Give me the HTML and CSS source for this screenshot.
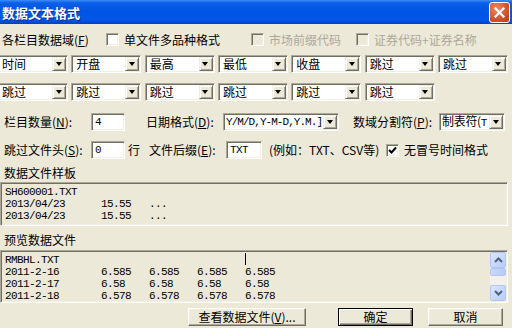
FILE: index.html
```html
<!DOCTYPE html>
<html>
<head>
  <link rel="stylesheet" href="styles.css">
</head>
<body>
  <div class="titlebar">
    <span class="title">数据文本格式</span>
    <span class="close">
      <svg width="11" height="11" viewBox="0 0 11 11"><path d="M1.5 1.5l8 8M9.5 1.5l-8 8" stroke="#fff" stroke-width="2.2" stroke-linecap="square"/></svg>
    </span>
  </div>

  <div class="opts">
    <span class="opt-label">各栏目数据域(<u>F</u>)</span>
    <span class="check opt-multi"><span class="box"></span>单文件多品种格式</span>
    <span class="check opt-market disabled"><span class="box"></span>市场前缀代码</span>
    <span class="check disabled"><span class="box"></span>证券代码+证券名称</span>
  </div>

  <div class="combos">
    <div class="combo"><span class="val">时间</span><span class="arrow"></span></div>
    <div class="combo"><span class="val">开盘</span><span class="arrow"></span></div>
    <div class="combo"><span class="val">最高</span><span class="arrow"></span></div>
    <div class="combo"><span class="val">最低</span><span class="arrow"></span></div>
    <div class="combo"><span class="val">收盘</span><span class="arrow"></span></div>
    <div class="combo"><span class="val">跳过</span><span class="arrow"></span></div>
    <div class="combo"><span class="val">跳过</span><span class="arrow"></span></div>
  </div>
  <div class="combos second">
    <div class="combo"><span class="val">跳过</span><span class="arrow"></span></div>
    <div class="combo"><span class="val">跳过</span><span class="arrow"></span></div>
    <div class="combo"><span class="val">跳过</span><span class="arrow"></span></div>
    <div class="combo"><span class="val">跳过</span><span class="arrow"></span></div>
    <div class="combo"><span class="val">跳过</span><span class="arrow"></span></div>
    <div class="combo"><span class="val">跳过</span><span class="arrow"></span></div>
  </div>

  <div class="fields">
    <span class="lbl lbl-count">栏目数量(<u>N</u>):</span>
    <span class="input in-small"><span class="mono">4</span></span>
    <span class="lbl lbl-date">日期格式(<u>D</u>):</span>
    <div class="combo combo-date"><span class="val mono">Y/M/D,Y-M-D,Y.M.]</span><span class="arrow"></span></div>
    <span class="lbl lbl-sep">数域分割符(<u>P</u>):</span>
    <div class="combo combo-sep"><span class="val">制表符(<span class="mono">T</span></span><span class="arrow"></span></div>
  </div>
  <div class="fields second">
    <span class="lbl lbl-count">跳过文件头(<u>S</u>):</span>
    <span class="input in-small"><span class="mono">0</span></span>
    <span class="lbl lbl-row">行</span>
    <span class="lbl lbl-date">文件后缀(<u>E</u>):</span>
    <span class="input in-ext"><span class="mono">TXT</span></span>
    <span class="lbl lbl-eg">(例如：TXT、CSV等)</span>
    <span class="check"><span class="box checked"><svg width="9" height="9" viewBox="0 0 9 9"><path d="M1 4l2.5 2.5L8 1.5" fill="none" stroke="#000" stroke-width="2"/></svg></span>无冒号时间格式</span>
  </div>

  <div class="caption">数据文件样板</div>
  <pre class="panel sample">SH600001.TXT
2013/04/23      15.55   ...
2013/04/23      15.55   ...</pre>

  <div class="caption">预览数据文件</div>
  <div class="panel preview">
    <pre class="lines">RMBHL.TXT                               <span class="caret"></span>
2011-2-16       6.585   6.585   6.585   6.585
2011-2-17       6.58    6.58    6.58    6.58
2011-2-18       6.578   6.578   6.578   6.578</pre>
    <div class="scrollbar">
      <span class="sb-btn"><svg width="9" height="6" viewBox="0 0 9 6"><path d="M1 5l3.5-3.5L8 5" fill="none" stroke="#4d6185" stroke-width="2"/></svg></span>
      <span class="sb-thumb"></span>
      <span class="sb-track"></span>
      <span class="sb-btn"><svg width="9" height="6" viewBox="0 0 9 6"><path d="M1 1l3.5 3.5L8 1" fill="none" stroke="#4d6185" stroke-width="2"/></svg></span>
    </div>
  </div>

  <div class="buttons">
    <button class="btn btn-view">查看数据文件(<u>V</u>)...</button>
    <button class="btn btn-ok default">确定</button>
    <button class="btn btn-cancel">取消</button>
  </div>
</body>
</html>
```

FILE: styles.css
```css
* {
  margin: 0;
  padding: 0;
  box-sizing: border-box;
}

body {
  width: 512px;
  height: 328px;
  overflow: hidden;
  background: #ece9d8;
  color: #000;
  font-family: "Noto Sans CJK SC", sans-serif;
  font-size: 12px;
  line-height: 14px;
}

u {
  text-decoration: underline;
  text-underline-offset: 1px;
}

.mono {
  font-family: "Liberation Mono", monospace;
  font-size: 11px;
  letter-spacing: -0.6px;
}

/* title bar */
.titlebar {
  height: 24px;
  display: flex;
  align-items: center;
  justify-content: space-between;
  padding: 0 2px 0 2px;
  background: linear-gradient(#3d8cf7 0%, #0b5fe8 12%, #0055e3 45%, #0056e8 85%, #003fc2 100%);
}

.title {
  color: #fff;
  font-weight: bold;
  font-size: 13px;
  text-shadow: 1px 1px #0a2c8a;
  margin-top: 1px;
}

.close {
  width: 21px;
  height: 21px;
  border: 1px solid #fff;
  border-radius: 3px;
  background: radial-gradient(circle at 35% 30%, #ec8a6a, #d3552f 55%, #b93a16);
  display: flex;
  align-items: center;
  justify-content: center;
}

/* checkbox row */
.opts {
  display: flex;
  align-items: center;
  height: 13px;
  margin-top: 9px;
  line-height: 13px;
}

.opt-label {
  width: 106px;
  padding-left: 2px;
}

.check {
  display: flex;
  align-items: center;
  white-space: nowrap;
}

.opt-multi {
  width: 145px;
}

.opt-market {
  width: 105px;
}

.box {
  width: 13px;
  height: 13px;
  margin-right: 5px;
  background: #fff;
  border: 1px solid;
  border-color: #aca899 #fff #fff #aca899;
  box-shadow: inset 1px 1px #716f64, inset -1px -1px #f1efe2;
  display: flex;
  align-items: center;
  justify-content: center;
}

.disabled {
  color: #aca899;
}

.disabled .box {
  background: #ece9d8;
}

/* combo boxes */
.combos {
  display: grid;
  grid-template-columns: repeat(7, 70px);
  column-gap: 3.33px;
  margin: 9px 0 0 -2px;
}

.combos.second {
  margin-top: 10px;
}

.combo {
  height: 18px;
  display: flex;
  align-items: center;
  background: #fff;
  border: 1px solid;
  border-color: #aca899 #fff #fff #aca899;
  box-shadow: inset 1px 1px #716f64, inset -1px -1px #f1efe2;
  padding: 1px;
}

.val {
  flex: 1;
  min-width: 0;
  padding-left: 3px;
  white-space: nowrap;
  line-height: 14px;
}

.combos .combo:first-child .val {
  padding-left: 2px;
}

.arrow {
  width: 14px;
  height: 14px;
  flex: none;
  background: #ece9d8;
  border: 1px solid;
  border-color: #f1efe2 #716f64 #716f64 #f1efe2;
  box-shadow: inset 1px 1px #fff, inset -1px -1px #aca899;
  position: relative;
}

.arrow::after {
  content: '';
  position: absolute;
  left: 2.5px;
  top: 4px;
  border-left: 3.5px solid transparent;
  border-right: 3.5px solid transparent;
  border-top: 4px solid #000;
}

/* edit rows */
.fields {
  display: flex;
  align-items: center;
  height: 18px;
  margin-top: 12px;
}

.fields.second {
  margin-top: 10px;
}

.lbl {
  white-space: nowrap;
}

.lbl-count {
  width: 91px;
  padding-left: 4px;
}

.input {
  height: 18px;
  display: flex;
  align-items: center;
  padding-left: 3px;
  background: #fff;
  border: 1px solid;
  border-color: #aca899 #fff #fff #aca899;
  box-shadow: inset 1px 1px #716f64, inset -1px -1px #f1efe2;
}

.in-small {
  width: 34px;
}

.lbl-date {
  width: 77px;
  margin-left: 21px;
}

.fields.second .lbl-date {
  margin-left: 6px;
}

.lbl-row {
  width: 15px;
  margin-left: 3px;
}

.combo-date {
  width: 116px;
}

.combo-date .val {
  padding-left: 1px;
  letter-spacing: -0.95px;
}

.lbl-sep {
  width: 86px;
  margin-left: 14px;
}

.combo-sep {
  width: 66px;
}

.combo-sep .val {
  padding-left: 1px;
  letter-spacing: -0.3px;
}

.in-ext {
  width: 36px;
}

.lbl-eg {
  width: 117px;
  margin-left: 7px;
}

/* read-only text panels */
.caption {
  margin-top: 7px;
  padding-left: 4px;
  height: 14px;
}

.panel {
  border: 1px solid;
  border-color: #aca899 #fff #fff #aca899;
  box-shadow: inset 1px 1px #716f64, inset -1px -1px #f1efe2;
  width: 508px;
}

pre,
.lines {
  font-family: "Liberation Mono", monospace;
  font-size: 11px;
  letter-spacing: -0.6px;
  line-height: 12px;
}

.sample {
  margin-top: 2px;
  height: 44px;
  padding: 3px 0 0 4px;
}

.caption + .preview {
  margin-top: 3px;
}

.preview {
  height: 53px;
  display: flex;
  padding: 1px 1px 1px 4px;
}

.lines {
  flex: 1;
  padding-top: 1px;
}

.caret {
  display: inline-block;
  width: 1px;
  height: 12px;
  background: #000;
  vertical-align: -2px;
}

.scrollbar {
  width: 16px;
  display: flex;
  flex-direction: column;
  background: #f3f1ec;
}

.sb-btn {
  height: 16px;
  flex: none;
  border: 1px solid #b3c6f2;
  border-radius: 2px;
  background: linear-gradient(135deg, #dbe6fd, #b9cdf8);
  display: flex;
  align-items: center;
  justify-content: center;
}

.sb-thumb {
  height: 8px;
  flex: none;
  border: 1px solid #b3c6f2;
  border-radius: 2px;
  background: linear-gradient(90deg, #c9d8fb, #b7cbf6);
}

.sb-track {
  flex: 1;
}

/* bottom buttons */
.buttons {
  display: flex;
  margin-top: 5px;
}

.btn {
  height: 18px;
  font-family: "Noto Sans CJK SC", sans-serif;
  font-size: 12px;
  line-height: 14px;
  color: #000;
  background: #ece9d8;
  border: 1px solid;
  border-color: #fff #716f64 #716f64 #fff;
  box-shadow: inset -1px -1px #aca899, inset 1px 1px #f1efe2;
}

.btn-view {
  width: 118px;
  margin-left: 188px;
}

.btn-ok {
  width: 75px;
  margin-left: 32px;
}

.btn-cancel {
  width: 75px;
  margin-left: 15px;
}

.default {
  border: 1px solid #000;
  box-shadow: inset 1px 1px #fff, inset -1px -1px #716f64, inset -2px -2px #aca899;
}
```
